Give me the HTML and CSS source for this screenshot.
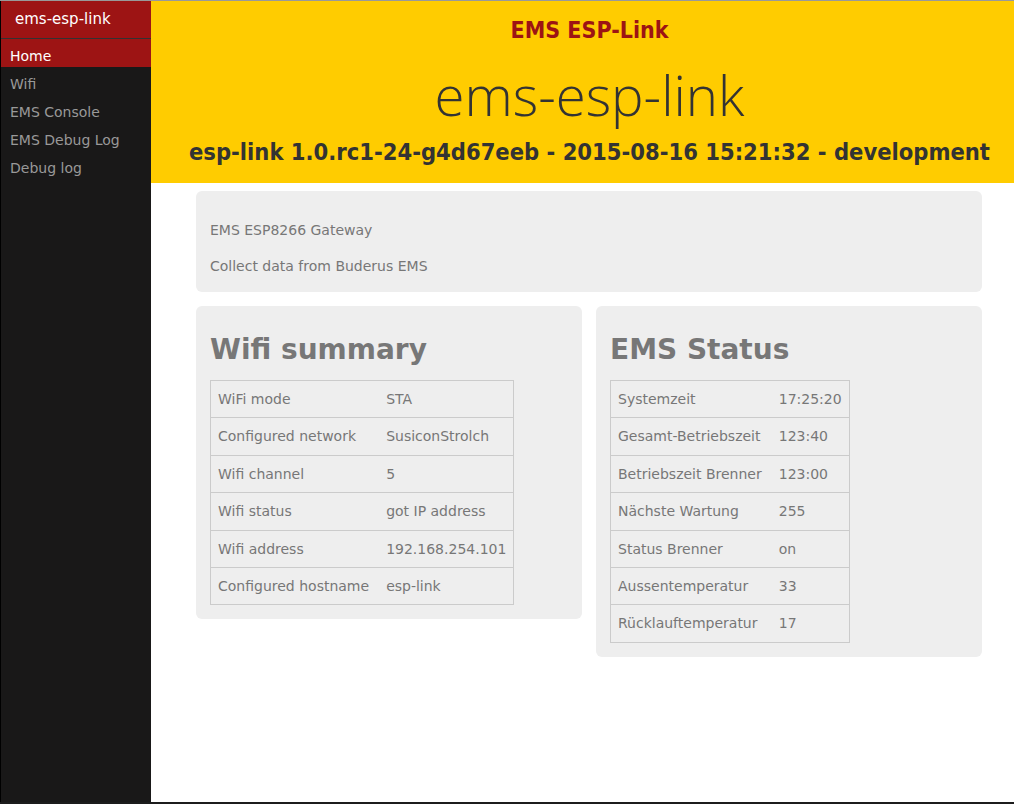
FILE: index.html
```html
<!DOCTYPE html>
<html>
<head>
<meta charset="utf-8">
<title>ems-esp-link</title>
<link rel="stylesheet" href="styles.css">
</head>
<body>
<div class="page">
  <nav class="sidebar">
    <div class="brand">ems-esp-link</div>
    <ul class="menu">
      <li class="item selected">Home</li>
      <li class="item">Wifi</li>
      <li class="item">EMS Console</li>
      <li class="item">EMS Debug Log</li>
      <li class="item">Debug log</li>
    </ul>
  </nav>
  <main class="main">
    <header class="header">
      <div class="site">EMS ESP-Link</div>
      <h1 class="title">ems-esp-link</h1>
      <h2 class="version">esp-link 1.0.rc1-24-g4d67eeb - 2015-08-16 15:21:32 - development</h2>
    </header>
    <div class="content">
      <section class="card intro">
        <p>EMS ESP8266 Gateway</p>
        <p>Collect data from Buderus EMS</p>
      </section>
      <div class="row">
        <section class="card">
          <h3 class="card-title">Wifi summary</h3>
          <table class="info">
            <tr><td>WiFi mode</td><td>STA</td></tr>
            <tr><td>Configured network</td><td>SusiconStrolch</td></tr>
            <tr><td>Wifi channel</td><td>5</td></tr>
            <tr><td>Wifi status</td><td>got IP address</td></tr>
            <tr><td>Wifi address</td><td>192.168.254.101</td></tr>
            <tr><td>Configured hostname</td><td>esp-link</td></tr>
          </table>
        </section>
        <section class="card">
          <h3 class="card-title">EMS Status</h3>
          <table class="info">
            <tr><td>Systemzeit</td><td>17:25:20</td></tr>
            <tr><td>Gesamt-Betriebszeit</td><td>123:40</td></tr>
            <tr><td>Betriebszeit Brenner</td><td>123:00</td></tr>
            <tr><td>Nächste Wartung</td><td>255</td></tr>
            <tr><td>Status Brenner</td><td>on</td></tr>
            <tr><td>Aussentemperatur</td><td>33</td></tr>
            <tr><td>Rücklauftemperatur</td><td>17</td></tr>
          </table>
        </section>
      </div>
    </div>
  </main>
</div>
</body>
</html>
```

FILE: styles.css
```css
html, body {
  margin: 0;
  padding: 0;
  height: 100%;
}
html {
  background: #1c1c1c;
}
body {
  font-family: "DejaVu Sans", Verdana, sans-serif;
  font-size: 14px;
  color: #777;
}
.page {
  display: flex;
  height: 802px;
  border-top: 1px solid #999;
  box-sizing: border-box;
  background: #fff;
}
.sidebar {
  width: 150px;
  flex: 0 0 150px;
  background: #191818;
  border-left: 1px solid #000;
}
.brand {
  background: #9d1414;
  color: #fff;
  font-size: 15px;
  height: 37px;
  line-height: 37px;
  padding-left: 14px;
  border-bottom: 1px solid #333;
}
.menu {
  list-style: none;
  margin: 0;
  padding: 0;
}
.item {
  height: 22px;
  line-height: 22px;
  padding: 6px 0 0 9px;
  color: #999;
  font-size: 14px;
}
.item.selected {
  background: #9d1414;
  color: #fff;
}
.main {
  flex: 1;
  display: flex;
  flex-direction: column;
}
.header {
  background: #ffcc00;
  height: 182px;
  padding: 15px 0 0 14px;
  text-align: center;
  box-sizing: border-box;
}
.site {
  font-family: "DejaVu Sans Condensed", "DejaVu Sans", sans-serif;
  font-weight: bold;
  color: #9d1414;
  font-size: 23px;
  line-height: 28px;
}
.title {
  margin: 18px 0 0;
  font-family: "Open Sans", sans-serif;
  font-weight: 300;
  font-size: 54.6px;
  line-height: 66px;
  color: #333;
}
.version {
  margin: 10px 0 0;
  font-family: "DejaVu Sans Condensed", "DejaVu Sans", sans-serif;
  font-weight: bold;
  font-size: 23.5px;
  line-height: 28px;
  color: #333;
  white-space: nowrap;
}
.content {
  padding: 8px 32px 0 45px;
  display: flex;
  flex-direction: column;
  gap: 14px;
}
.card {
  background: #eee;
  border-radius: 6px;
  padding: 14px;
}
.intro {
  padding-bottom: 15px;
}
.intro p {
  margin: 14px 0;
  line-height: 22px;
}
.intro p:last-child {
  margin-bottom: 0;
}
.row {
  display: flex;
  gap: 14px;
  align-items: flex-start;
}
.row .card {
  flex: 1;
}
.card-title {
  margin: 13px 0 13px;
  font-size: 28px;
  line-height: 34px;
  font-weight: bold;
  color: #777;
}
.info {
  border-collapse: collapse;
  border: 1px solid #cbcbcb;
}
.info td {
  padding: 7px 7px;
  line-height: 22.4px;
  border-bottom: 1px solid #cbcbcb;
  white-space: nowrap;
}
.info td:first-child {
  padding-right: 10px;
}
```
